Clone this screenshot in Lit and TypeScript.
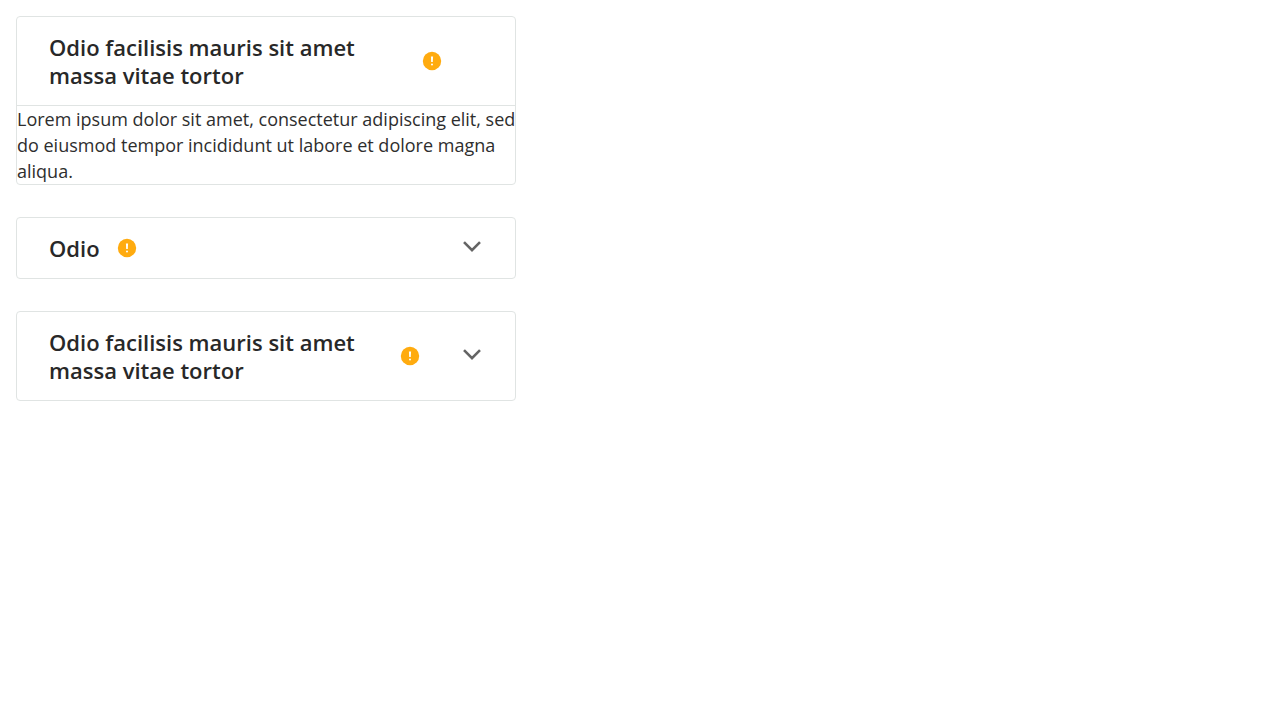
import { LitElement, html, css, nothing } from "lit";

const warning = html`<svg class="warning" viewBox="0 0 24 24" aria-hidden="true">
  <circle cx="12" cy="12" r="9.2" fill="#ffab0f" />
  <path d="M10.9 7.6 H13.1 L12.8 13 H11.2 Z" fill="#fff" />
  <circle cx="12" cy="15.4" r="1" fill="#fff" />
</svg>`;

const chevron = html`<svg class="chevron" viewBox="0 0 20 20" aria-hidden="true">
  <path d="M2 5.1 L10 13.1 L18 5.1" fill="none" stroke="#646464" stroke-width="2.6" />
</svg>`;

class SectionCard extends LitElement {
  static properties = {
    heading: { type: String },
    open: { type: Boolean },
    toggle: { type: Boolean },
  };
  declare heading: string;
  declare open: boolean;
  declare toggle: boolean;

  static styles = css`
    :host { display: block; }
    .card { border: 1px solid #e0e4e3; border-radius: 4px; background: #fff; }
    .header { display: flex; align-items: center; justify-content: space-between; padding: 16px 33px 16px 32px; }
    .lead { display: flex; align-items: center; gap: 15px; max-width: 395px; }
    .lead.narrow { max-width: 373px; }
    .title { margin: 0; font-size: 22px; line-height: 28px; font-weight: 600; color: #282828; }
    .warning { width: 24px; height: 24px; flex: none; display: block; }
    .chevron { width: 20px; height: 20px; flex: none; display: block; margin-bottom: 2px; }
    .body { border-top: 1px solid #e0e4e3; font-size: 18px; line-height: 26px; color: #2e2e2e; }
    .text { margin: 0 -2px 0 0; }
  `;

  render() {
    return html`<section class="card">
      <div class="header">
        <div class="lead ${this.toggle ? "narrow" : ""}">
          <h2 class="title">${this.heading}</h2>
          ${warning}
        </div>
        ${this.toggle ? chevron : nothing}
      </div>
      ${this.open ? html`<div class="body"><p class="text"><slot></slot></p></div>` : nothing}
    </section>`;
  }
}
customElements.define("section-card", SectionCard);

class AppRoot extends LitElement {
  static styles = css`
    :host { display: block; font-family: "Open Sans", sans-serif; }
    .page { display: flex; flex-direction: column; gap: 32px; width: 500px; padding: 16px; }
  `;
  render() {
    return html`<main class="page">
      <section-card heading="Odio facilisis mauris sit amet massa vitae tortor" open>Lorem ipsum dolor sit amet, consectetur adipiscing elit, sed do eiusmod tempor incididunt ut labore et dolore magna aliqua.</section-card>
      <section-card heading="Odio" toggle></section-card>
      <section-card heading="Odio facilisis mauris sit amet massa vitae tortor" toggle></section-card>
    </main>`;
  }
}
customElements.define("app-root", AppRoot);
